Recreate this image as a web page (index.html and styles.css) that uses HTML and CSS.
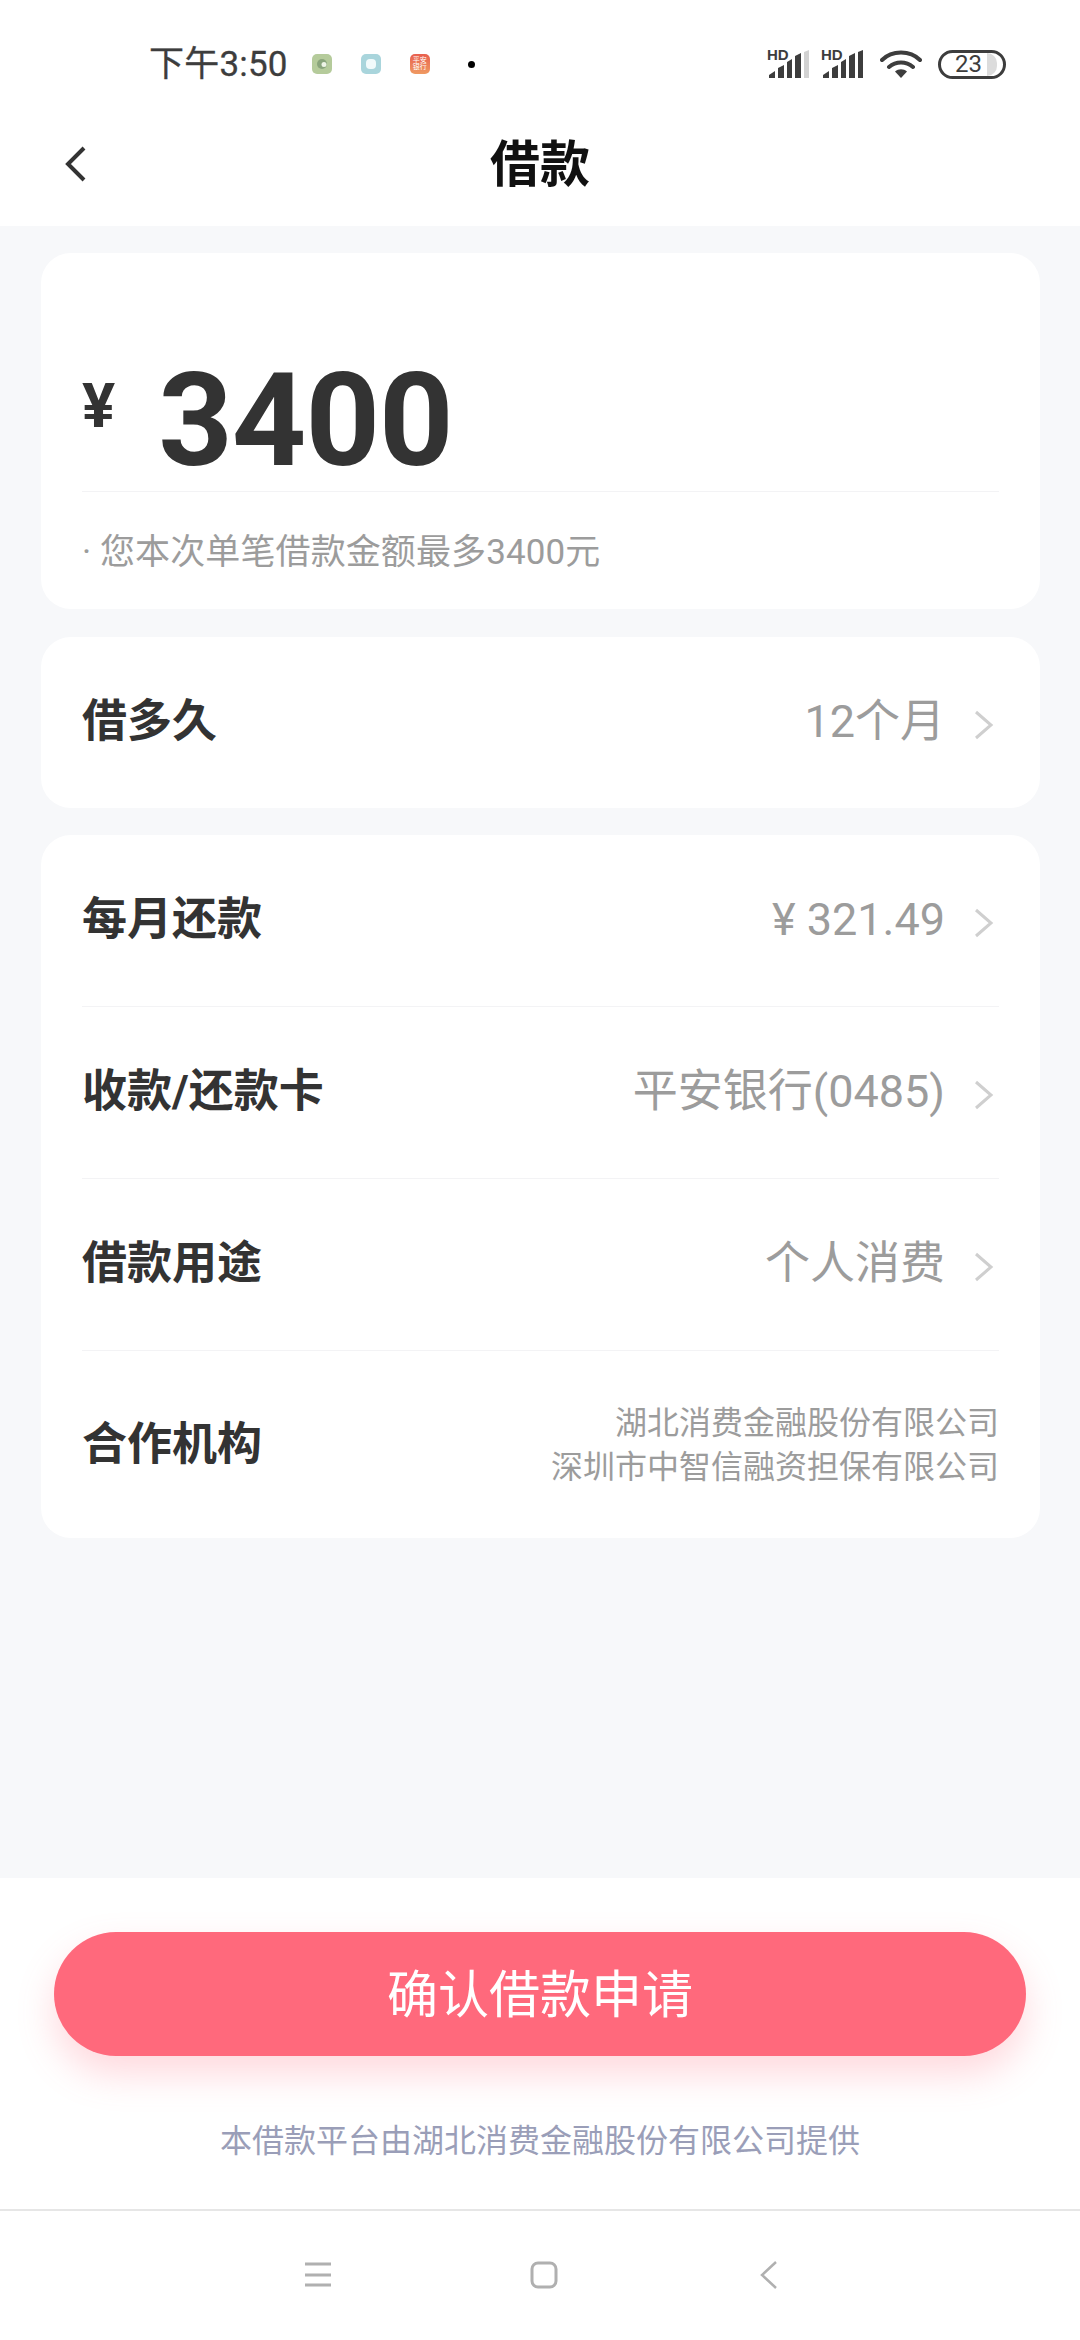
FILE: index.html
```html
<!DOCTYPE html>
<html lang="zh-CN">
<head>
<meta charset="utf-8">
<title>借款</title>
<link rel="stylesheet" href="styles.css">
</head>
<body>
<div class="page">
  <div class="top">
    <div class="status">
      <span class="time">下午3:50</span>
      <div class="notifs">
        <svg class="ni" viewBox="0 0 20 20"><rect width="20" height="20" rx="5" fill="#b5cb9b"/><circle cx="10" cy="10" r="5" fill="#8aa57c"/><circle cx="12" cy="10.500" r="2.500" fill="#eef4e6"/></svg>
        <svg class="ni" viewBox="0 0 20 20"><rect width="20" height="20" rx="5" fill="#a9d5dc"/><rect x="5" y="5" width="10" height="10" rx="4" fill="#f1fafb"/></svg>
        <div class="ni bank"><span>平安</span><span>银行</span></div>
        <span class="dot"></span>
      </div>
      <div class="sys">
        <div class="sig">
          <svg class="bars" viewBox="0 0 41 30"><path d="M0 29v-3l6-4v7zM9 29V19l6-3v13zM18 29V13l5-3v19zM26 29V7l6-3v25z" fill="#3d3d3d"/><path d="M35 29V3l5-2v28z" fill="#d2d2d2"/></svg>
          <span class="hd">HD</span>
        </div>
        <div class="sig">
          <svg class="bars" viewBox="0 0 41 30"><path d="M0 29v-3l6-4v7zM9 29V19l6-3v13zM18 29V13l5-3v19zM26 29V7l6-3v25zM35 29V3l5-2v28z" fill="#3d3d3d"/></svg>
          <span class="hd">HD</span>
        </div>
        <svg class="wifi" viewBox="0 0 42 30"><path d="M2 11C12 1 30 1 40 11M9 18c7-6 17-6 24 0" fill="none" stroke="#3d3d3d" stroke-width="4" stroke-linecap="round"/><path d="M15 22.500c3.500-3 8.500-3 12 0L21 29z" fill="#3d3d3d"/></svg>
        <div class="batt"><span class="batt-num">23</span><span class="batt-fill"></span></div>
      </div>
    </div>
    <header class="head">
      <svg class="back" viewBox="0 0 22 36"><path d="M19 2 3 18l16 16" fill="none" stroke="#333" stroke-width="4"/></svg>
      <h1 class="title">借款</h1>
      <span></span>
    </header>
  </div>

  <main class="main">
    <section class="card card-amount">
      <div class="amount"><span class="yen">¥</span><span class="num">3400</span></div>
      <p class="hint">· 您本次单笔借款金额最多3400元</p>
    </section>

    <section class="card card-term">
      <div class="row row-term">
        <span class="label">借多久</span>
        <span class="value">12个月</span>
        <svg class="chev" viewBox="0 0 20 30"><path d="M2 2l15 13L2 28" fill="none" stroke="#cfcfcf" stroke-width="3"/></svg>
      </div>
    </section>

    <section class="card card-list">
      <div class="row row-line">
        <span class="label">每月还款</span>
        <span class="value">¥ 321.49</span>
        <svg class="chev" viewBox="0 0 20 30"><path d="M2 2l15 13L2 28" fill="none" stroke="#cfcfcf" stroke-width="3"/></svg>
      </div>
      <div class="row row-line">
        <span class="label">收款/还款卡</span>
        <span class="value">平安银行(0485)</span>
        <svg class="chev" viewBox="0 0 20 30"><path d="M2 2l15 13L2 28" fill="none" stroke="#cfcfcf" stroke-width="3"/></svg>
      </div>
      <div class="row row-line">
        <span class="label">借款用途</span>
        <span class="value">个人消费</span>
        <svg class="chev" viewBox="0 0 20 30"><path d="M2 2l15 13L2 28" fill="none" stroke="#cfcfcf" stroke-width="3"/></svg>
      </div>
      <div class="row row-org">
        <span class="label">合作机构</span>
        <div class="orgs"><span>湖北消费金融股份有限公司</span><span>深圳市中智信融资担保有限公司</span></div>
      </div>
    </section>
  </main>

  <footer class="foot">
    <button class="cta">确认借款申请</button>
    <p class="note">本借款平台由湖北消费金融股份有限公司提供</p>
  </footer>

  <nav class="nav">
    <svg class="nav-i" viewBox="0 0 30 30"><path d="M2 4h26M2 15h26M2 25h26" stroke="#b0b0b0" stroke-width="3" fill="none"/></svg>
    <svg class="nav-i" viewBox="0 0 30 30"><rect x="3" y="3" width="24" height="24" rx="6" stroke="#b0b0b0" stroke-width="3" fill="none"/></svg>
    <svg class="nav-i" viewBox="0 0 30 30"><path d="M21 2 7 15l14 13" stroke="#b0b0b0" stroke-width="2.500" fill="none"/></svg>
  </nav>
</div>
</body>
</html>
```

FILE: styles.css
```css
* { box-sizing: border-box; margin: 0; padding: 0; }
html, body { width: 1080px; height: 2340px; overflow: hidden; }
body { font-family: Roboto, "Noto Sans CJK SC", sans-serif; background: #f7f8fa; }
.page { width: 1080px; height: 2340px; display: flex; flex-direction: column; }

.top { background: #fff; height: 226px; display: flex; flex-direction: column; }
.status { height: 128px; display: flex; align-items: center; padding: 0 74px 0 149px; }
.time { font-size: 35px; color: #3d3d3d; line-height: 1; letter-spacing: .2px; -webkit-text-stroke: .3px #3d3d3d; }
.notifs { display: flex; align-items: center; margin-left: 24px; gap: 29px; }
.ni { width: 20px; height: 20px; display: block; }
.bank { background: linear-gradient(#e8604f, #ef9a62); border-radius: 5px; display: flex; flex-direction: column; align-items: center; justify-content: center; color: #fff; font-size: 7px; line-height: 7px; overflow: hidden; }
.dot { width: 7px; height: 7px; border-radius: 50%; background: #000; margin-left: 9px; }
.sys { margin-left: auto; display: flex; align-items: center; }
.sig { width: 41px; height: 30px; margin-right: 13px; position: relative; }
.bars { width: 41px; height: 30px; display: block; }
.hd { position: absolute; left: -2px; top: -2px; font: 700 15px/15px "Liberation Sans", sans-serif; color: #3d3d3d; }
.wifi { width: 42px; height: 30px; margin: 0 16px 0 3px; display: block; }
.batt { width: 68px; height: 29px; border: 3px solid #3d3d3d; border-radius: 15px; display: flex; align-items: center; padding-left: 14px; }
.batt-num { font-size: 24px; color: #3d3d3d; line-height: 1; }
.batt-fill { width: 10px; height: 23px; background: #dcdcdc; border-radius: 0 11px 11px 0; margin-left: 5px; }

.head { flex: 1; display: grid; grid-template-columns: 1fr auto 1fr; align-items: center; padding: 0 65px 24px; }
.back { width: 22px; height: 36px; display: block; margin-top: -2px; }
.title { font-size: 50px; font-weight: 700; color: #111; line-height: 1; }

.main { flex: 1; padding: 27px 40px 0 41px; display: flex; flex-direction: column; gap: 27px; }
.card { background: #fff; border-radius: 30px; padding: 0 41px; }
.card-amount { height: 356px; margin-bottom: 1px; }
.amount { height: 239px; border-bottom: 1px solid #f3f3f5; display: flex; align-items: flex-start; padding-top: 98px; }
.yen { font-size: 62px; font-weight: 700; color: #333; line-height: 1; margin-top: 24px; }
.num { font-size: 130px; font-weight: 700; color: #333; line-height: 1; margin-left: 43px; margin-top: 5px; letter-spacing: -1px; }
.hint { font-size: 35px; color: #9c9c9c; line-height: 1; margin-top: 43px; letter-spacing: .1px; }

.card-term { height: 171px; }
.card-list { height: 703px; display: flex; flex-direction: column; }
.row { display: flex; align-items: center; }
.row-term { height: 171px; }
.row-line { height: 172px; border-bottom: 1px solid #f3f3f5; }
.row-org { flex: 1; justify-content: space-between; }
.label { font-size: 45px; font-weight: 700; color: #333; line-height: 1; margin-top: -3px; }
.value { font-size: 45px; color: #9c9c9c; line-height: 1; margin-left: auto; margin-top: -2px; }
.chev { width: 20px; height: 30px; margin-left: 29px; margin-right: 5px; margin-top: 4px; display: block; }
.orgs { display: flex; flex-direction: column; align-items: flex-end; font-size: 32px; color: #9c9c9c; line-height: 44px; }
.row-org .label { margin-top: 0; }

.foot { height: 331px; background: #fff; display: flex; flex-direction: column; align-items: center; padding-top: 54px; }
.cta { width: 972px; height: 124px; border: 0; border-radius: 62px; background: #ff697c; color: #fff; font-family: inherit; font-size: 51px; padding-bottom: 6px; box-shadow: 0 18px 36px rgba(255, 105, 124, .25); }
.note { font-size: 32px; color: #9a9eb8; line-height: 1; margin-top: 69px; }

.nav { height: 131px; background: #fff; border-top: 2px solid #e6e6e6; display: flex; justify-content: center; align-items: center; gap: 196px; padding: 0 0 1px 8px; }
.nav-i { width: 30px; height: 30px; display: block; }
```
